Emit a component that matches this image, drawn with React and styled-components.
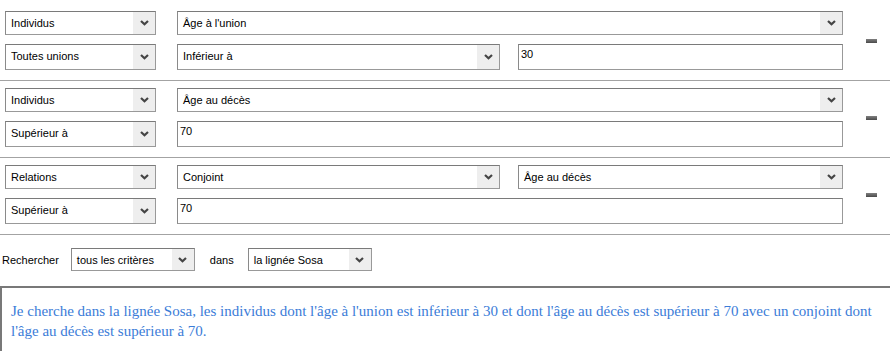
import styled, { createGlobalStyle } from "styled-components";

const GlobalStyle = createGlobalStyle`
  body {
    margin: 0;
    background: #fff;
    font-family: "Liberation Sans", Arial, sans-serif;
    font-size: 11px;
    color: #000;
  }
`;

const Page = styled.div`
  width: 890px;
  height: 351px;
  padding-top: 4px;
  box-sizing: border-box;
  overflow: hidden;
`;

const Group = styled.div`
  display: flex;
  align-items: center;
  padding: 7px 0 10px 5px;
  border-bottom: 1px solid #a3a3a3;
`;

const Rows = styled.div`
  display: flex;
  flex-direction: column;
  gap: 9px;
  width: 838px;
`;

const Row = styled.div`
  display: flex;
  height: ${(p) => (p.$tall ? "26px" : "24px")};
`;

const Box = styled.div`
  box-sizing: border-box;
  display: flex;
  width: ${(p) => p.$w}px;
  margin-left: ${(p) => p.$gap || 0}px;
  height: ${(p) => (p.$h ? p.$h + "px" : "100%")};
  border: 1px solid #999;
  border-top-color: #7a7a7a;
  border-left-color: #8a8a8a;
  background: #fff;
`;

const Label = styled.span`
  flex: 1;
  padding: 5px 0 0 5px;
  white-space: nowrap;
`;

const Arrow = styled.span`
  width: 22px;
  background: #eeeeee;
  display: flex;
  align-items: center;
  justify-content: center;
`;

const Field = styled(Box)`
  padding: 3px 2px;
`;

const Minus = styled.button`
  width: 11px;
  height: 4px;
  margin-left: 23px;
  padding: 0;
  border: none;
  background: linear-gradient(#808080, #4a4a4a);
  cursor: pointer;
`;

const SearchRow = styled.div`
  display: flex;
  align-items: center;
  padding: 13px 0 15px 2px;
`;

const Text = styled.span`
  margin: 0 ${(p) => p.$mr}px 0 ${(p) => p.$ml || 0}px;
`;

const Result = styled.div`
  border-top: 2px solid #787878;
  border-left: 2px solid #787878;
  padding: 13px 8px 0 9px;
  height: 59px;
  font-family: "Liberation Serif", "Times New Roman", serif;
  font-size: 15px;
  line-height: 20px;
  color: #3b7cd8;
`;

function Chevron() {
  return (
    <svg width="9" height="6" viewBox="0 0 9 6">
      <polyline
        points="1,1 4.5,4.3 8,1"
        fill="none"
        stroke="#444"
        strokeWidth="2.2"
      />
    </svg>
  );
}

function Select({ children, w, gap, h }) {
  return (
    <Box $w={w} $gap={gap} $h={h}>
      <Label>{children}</Label>
      <Arrow>
        <Chevron />
      </Arrow>
    </Box>
  );
}

function Input({ children, w, gap }) {
  return (
    <Field $w={w} $gap={gap}>
      {children}
    </Field>
  );
}

const groups = [
  [
    [
      { type: "select", w: 151, text: "Individus" },
      { type: "select", w: 666, gap: 21, text: "Âge à l'union" },
    ],
    [
      { type: "select", w: 151, text: "Toutes unions" },
      { type: "select", w: 323, gap: 21, text: "Inférieur à" },
      { type: "input", w: 325, gap: 18, text: "30" },
    ],
  ],
  [
    [
      { type: "select", w: 151, text: "Individus" },
      { type: "select", w: 666, gap: 21, text: "Âge au décès" },
    ],
    [
      { type: "select", w: 151, text: "Supérieur à" },
      { type: "input", w: 666, gap: 21, text: "70" },
    ],
  ],
  [
    [
      { type: "select", w: 151, text: "Relations" },
      { type: "select", w: 323, gap: 21, text: "Conjoint" },
      { type: "select", w: 325, gap: 18, text: "Âge au décès" },
    ],
    [
      { type: "select", w: 151, text: "Supérieur à" },
      { type: "input", w: 666, gap: 21, text: "70" },
    ],
  ],
];

export default function App() {
  return (
    <Page>
      <GlobalStyle />
      {groups.map((rows, gi) => (
        <Group key={gi}>
          <Rows>
            {rows.map((cells, ri) => (
              <Row key={ri} $tall={ri === 1}>
                {cells.map((c, ci) =>
                  c.type === "select" ? (
                    <Select key={ci} w={c.w} gap={c.gap}>
                      {c.text}
                    </Select>
                  ) : (
                    <Input key={ci} w={c.w} gap={c.gap}>
                      {c.text}
                    </Input>
                  )
                )}
              </Row>
            ))}
          </Rows>
          <Minus aria-label="Supprimer" />
        </Group>
      ))}
      <SearchRow>
        <Text $mr={12}>Rechercher</Text>
        <Select w={124} h={23}>tous les critères</Select>
        <Text $ml={15} $mr={14}>dans</Text>
        <Select w={124} h={23}>la lignée Sosa</Select>
      </SearchRow>
      <Result>
        Je cherche dans la lignée Sosa, les individus dont l'âge à l'union est
        inférieur à 30 et dont l'âge au décès est supérieur à 70 avec un
        conjoint dont l'âge au décès est supérieur à 70.
      </Result>
    </Page>
  );
}
